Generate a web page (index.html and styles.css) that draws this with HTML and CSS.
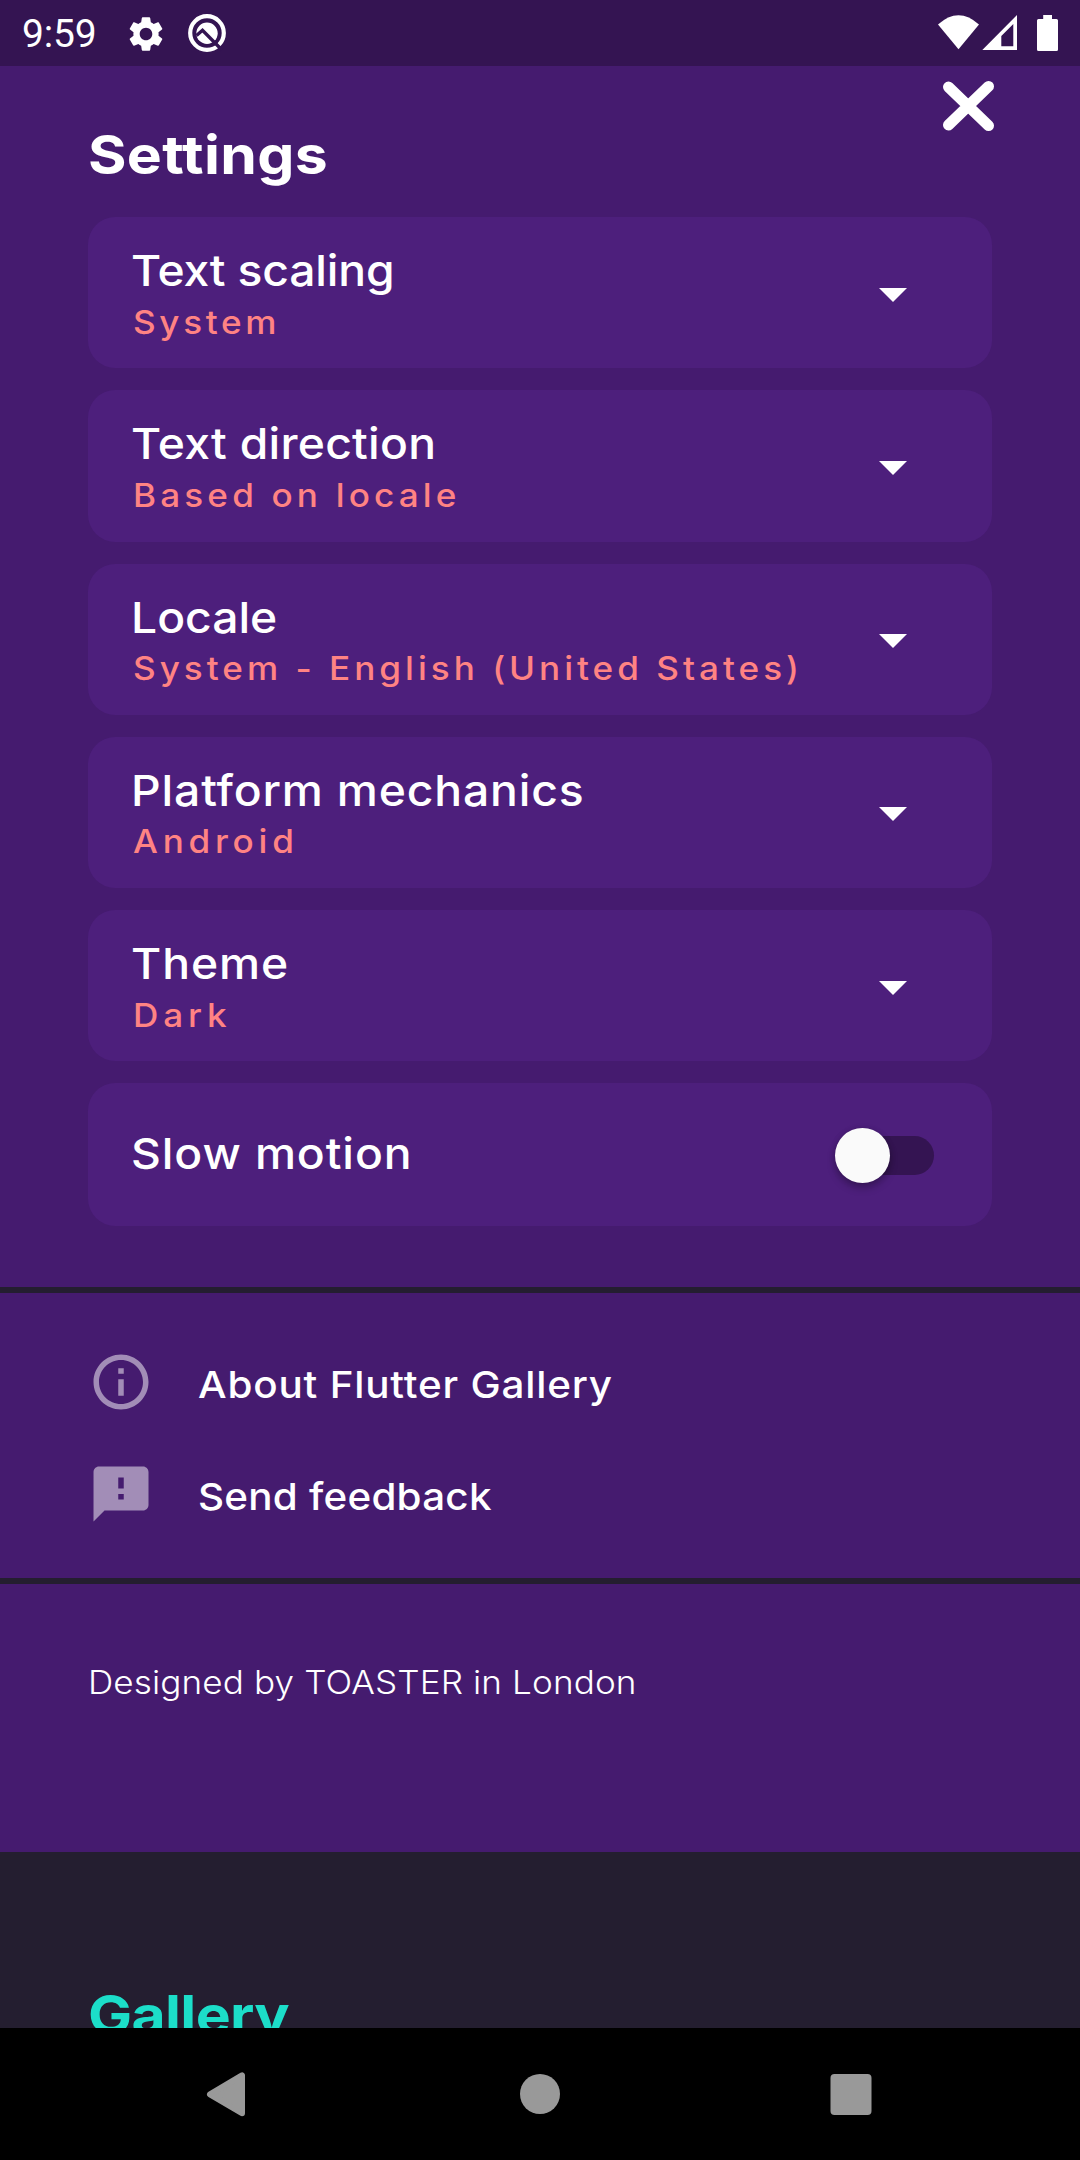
FILE: index.html
```
<!DOCTYPE html>
<html lang="en">
<head>
<meta charset="utf-8">
<title>Settings</title>
<link rel="stylesheet" href="styles.css">
</head>
<body>
<div class="phone">
  <header class="status-bar">
    <span class="clock">9:59</span>
    <svg class="icon-gear" viewBox="0 0 24 24"><path fill="#fff" d="M19.14 12.94c.04-.3.06-.61.06-.94 0-.32-.02-.64-.07-.94l2.03-1.58c.18-.14.23-.41.12-.61l-1.92-3.32c-.12-.22-.37-.29-.59-.22l-2.39.96c-.5-.38-1.03-.7-1.62-.94l-.36-2.54c-.04-.24-.24-.41-.48-.41h-3.84c-.24 0-.43.17-.47.41l-.36 2.54c-.59.24-1.13.57-1.62.94l-2.39-.96c-.22-.08-.47 0-.59.22L2.74 8.87c-.12.21-.08.47.12.61l2.03 1.58c-.05.3-.09.63-.09.94s.02.64.07.94l-2.03 1.58c-.18.14-.23.41-.12.61l1.92 3.32c.12.22.37.29.59.22l2.39-.96c.5.38 1.03.7 1.62.94l.36 2.54c.05.24.24.41.48.41h3.84c.24 0 .44-.17.47-.41l.36-2.54c.59-.24 1.13-.56 1.62-.94l2.39.96c.22.08.47 0 .59-.22l1.92-3.32c.12-.22.07-.47-.12-.61l-2.01-1.58zM12 15.6c-1.98 0-3.6-1.62-3.6-3.6s1.62-3.6 3.6-3.6 3.6 1.62 3.6 3.6-1.62 3.6-3.6 3.6z"/></svg>
    <svg class="icon-beta" viewBox="0 0 38 38">
      <circle cx="19" cy="19" r="16.8" fill="none" stroke="#fff" stroke-width="4.2"/>
      <circle cx="19" cy="19.3" r="10.700" fill="#fff"/>
      <path d="M8.500 21.500L14.500 16.300L34 36" fill="none" stroke="#341452" stroke-width="3.4"/>
    </svg>
    <span class="status-space"></span>
    <svg class="icon-radio" viewBox="0 0 80 38">
      <path fill="#fff" d="M0 10.5Q20.500 -8 41 10.5L20.500 35.300Z"/>
      <path fill="#fff" fill-rule="evenodd" d="M44.300 36L79 1V36ZM63.300 32.300H75.300V10L63.300 22Z"/>
    </svg>
    <svg class="icon-battery" viewBox="0 0 21 36"><path fill="#fff" d="M6.200 0H15V4H19.500Q21 4 21 5.500V34.500Q21 36 19.500 36H1.500Q0 36 0 34.500V5.500Q0 4 1.500 4H6.200Z"/></svg>
  </header>

  <main class="content">
    <section class="panel options">
      <div class="heading">
        <h1 class="page-title">Settings</h1>
        <svg class="icon-close" viewBox="0 0 52 52"><path d="M6.500 7L46.500 45.600M46.500 6.400L6.500 45" stroke="#fff" stroke-width="11" stroke-linecap="round"/></svg>
      </div>
      <div class="cards">
        <div class="card">
          <div class="labels"><div class="name n-scaling">Text scaling</div><div class="value v-system">System</div></div>
          <svg class="arrow" viewBox="0 0 28 14"><path fill="#fff" d="M0 0H28L14 14Z"/></svg>
        </div>
        <div class="card">
          <div class="labels"><div class="name n-direction">Text direction</div><div class="value v-based">Based on locale</div></div>
          <svg class="arrow" viewBox="0 0 28 14"><path fill="#fff" d="M0 0H28L14 14Z"/></svg>
        </div>
        <div class="card">
          <div class="labels"><div class="name n-locale">Locale</div><div class="value v-english">System - English (United States)</div></div>
          <svg class="arrow" viewBox="0 0 28 14"><path fill="#fff" d="M0 0H28L14 14Z"/></svg>
        </div>
        <div class="card">
          <div class="labels"><div class="name n-platform">Platform mechanics</div><div class="value v-android">Android</div></div>
          <svg class="arrow" viewBox="0 0 28 14"><path fill="#fff" d="M0 0H28L14 14Z"/></svg>
        </div>
        <div class="card">
          <div class="labels"><div class="name n-theme">Theme</div><div class="value v-dark">Dark</div></div>
          <svg class="arrow" viewBox="0 0 28 14"><path fill="#fff" d="M0 0H28L14 14Z"/></svg>
        </div>
        <div class="card card-switch">
          <div class="name n-slow">Slow motion</div>
          <div class="switch"><span class="thumb"></span></div>
        </div>
      </div>
    </section>

    <section class="panel links">
      <div class="link">
        <svg class="link-icon" viewBox="0 0 24 24"><path fill="#a28db7" d="M11 7h2v2h-2zm0 4h2v6h-2zm1-9C6.480 2 2 6.480 2 12s4.480 10 10 10 10-4.480 10-10S17.520 2 12 2zm0 18c-4.410 0-8-3.590-8-8s3.590-8 8-8 8 3.590 8 8-3.590 8-8 8z"/></svg>
        <span class="link-text l-about">About Flutter Gallery</span>
      </div>
      <div class="link">
        <svg class="link-icon" viewBox="0 0 24 24"><path fill="#a28db7" d="M20 2H4c-1.100 0-1.990.9-1.990 2L2 22l4-4h14c1.100 0 2-.9 2-2V4c0-1.100-.9-2-2-2zm-7 12h-2v-2h2v2zm0-4h-2V6h2v4z"/></svg>
        <span class="link-text">Send feedback</span>
      </div>
    </section>

    <section class="panel credit"><p class="credit-text">Designed by TOASTER in London</p></section>

    <section class="gallery"><h2 class="gallery-title">Gallery</h2></section>
  </main>

  <nav class="nav-bar">
    <svg class="nav-icon" viewBox="0 0 48 48"><path d="M8 24.300L40 5.400V43.200Z" fill="#999" stroke="#999" stroke-width="6" stroke-linejoin="round"/></svg>
    <svg class="nav-icon nav-home" viewBox="0 0 48 48"><circle cx="24" cy="24" r="20" fill="#999"/></svg>
    <svg class="nav-icon" viewBox="0 0 48 48"><rect x="3.500" y="4" width="41" height="41" rx="4" fill="#999"/></svg>
  </nav>
</div>
</body>
</html>
```
FILE: styles.css
```
* { box-sizing: border-box; }
body { margin: 0; background: #000; font-family: Inter, sans-serif; color: #fff; }
h1, h2, p { margin: 0; }
h1, h2 { font-weight: 700; }
svg { display: block; flex: none; }

.phone { width: 1080px; height: 2160px; display: flex; flex-direction: column; overflow: hidden; }

.status-bar { height: 66px; flex: none; background: #341452; display: flex; align-items: flex-start; padding: 0 22px; }
.clock { width: 102.8px; font: 400 39px/66px Roboto, sans-serif; letter-spacing: -.2px; padding-top: 1px; white-space: nowrap; }
.icon-gear { width: 42px; height: 42px; margin-top: 12.5px; }
.icon-beta { width: 38px; height: 38px; margin: 14px 0 0 21.200px; }
.status-space { flex: 1; }
.icon-radio { width: 80px; height: 38px; margin-top: 14px; }
.icon-battery { width: 21px; height: 36px; margin: 15px 0 0 19px; }

.content { flex: 1; min-height: 0; display: flex; flex-direction: column; background: #241e30; overflow: hidden; }
.panel { background: #451b6f; flex: none; }

.page-title, .gallery-title { font-size: 54px; line-height: 64px; transform: scaleX(1.09); transform-origin: 0 50%; white-space: nowrap; }
.name, .value, .link-text, .credit-text { transform: scaleX(1.08); transform-origin: 0 50%; white-space: nowrap; }

.options { height: 1221.3px; padding: 0 88px; }
.heading { height: 151px; display: flex; justify-content: space-between; }
.page-title { letter-spacing: .3px; padding-top: 56.500px; }
.icon-close { width: 52px; height: 52px; margin: 14px -1.500px 0 0; }

.cards { display: flex; flex-direction: column; gap: 22px; }
.card { height: 151.25px; border-radius: 27.500px; background: #4d1f7c; display: flex; justify-content: space-between; padding: 0 85px 0 43px; }
.labels { width: 640px; padding-top: 28px; }
.name { font-size: 42.800px; font-weight: 500; line-height: 52px; }
.value { margin: 3.600px 0 0 2px; font-size: 32.500px; font-weight: 450; line-height: 44px; color: #ff8383; }
.arrow { width: 28px; height: 14px; margin-top: 70.500px; }

.n-scaling { letter-spacing: -.15px; }
.n-direction { letter-spacing: .25px; }
.n-locale { letter-spacing: 0; }
.n-platform { letter-spacing: .8px; }
.n-theme { letter-spacing: .9px; }
.n-slow { letter-spacing: .85px; }
.v-system { letter-spacing: 3.4px; }
.v-based { letter-spacing: 3.850px; }
.v-english { letter-spacing: 3.700px; }
.v-android { letter-spacing: 4.400px; }
.v-dark { letter-spacing: 4.500px; }

.card-switch { height: 143px; padding-right: 58px; align-items: center; }
.n-slow { margin-bottom: 2.500px; }
.switch { width: 91px; height: 38.500px; border-radius: 20px; background: #341452; display: flex; align-items: center; margin-top: 1.500px; }
.thumb { width: 55px; height: 55px; flex: none; margin-left: -8px; border-radius: 50%; background: #fafafa; box-shadow: 0 5px 8px rgba(0,0,0,.24), 0 1px 6px rgba(0,0,0,.15); }

.links { margin-top: 5.700px; height: 285.500px; padding: 33px 88px; }
.link { height: 111.700px; display: flex; align-items: center; }
.link-icon { width: 66px; height: 66px; margin-left: -.500px; }
.link-text { margin: 6px 0 0 44.500px; font-size: 37.400px; font-weight: 500; line-height: 48px; letter-spacing: .22px; }
.l-about { letter-spacing: .75px; }

.credit { margin-top: 5.500px; height: 268px; padding: 77px 88px; }
.credit-text { font-size: 32.500px; font-weight: 350; line-height: 44px; letter-spacing: .1px; }

.gallery { padding: 131px 88px 0; flex: none; }
.gallery-title { letter-spacing: -.6px; color: #1cdec9; }

.nav-bar { height: 132px; flex: none; background: #000; display: flex; justify-content: space-between; padding: 42px 205.500px 0 202px; }
.nav-icon { width: 48px; height: 48px; }
.nav-home { margin-left: 3.500px; }
```
